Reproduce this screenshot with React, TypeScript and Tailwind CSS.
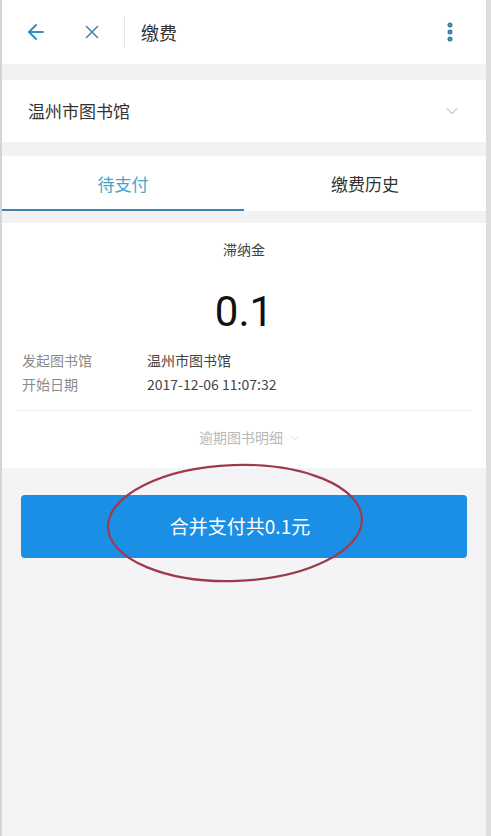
import { ArrowLeft, X, EllipsisVertical, ChevronDown } from 'lucide-react';

const font = { fontFamily: '"Noto Sans CJK SC", "Noto Sans", sans-serif' };

function Header() {
  return (
    <div className="h-[64px] bg-white flex items-center">
      <ArrowLeft className="ml-[22px] w-[24px] h-[24px] text-[#2e90c8]" strokeWidth={2} />
      <X className="ml-[33px] w-[22px] h-[22px] text-[#4f86ad]" strokeWidth={1.8} />
      <div className="ml-[21px] w-px h-[30px] bg-[#e6e6e6]" />
      <div className="ml-[16px] text-[18px] text-[#333]">缴费</div>
      <div className="flex-1" />
      <EllipsisVertical className="mr-[24px] w-[24px] h-[28px] text-[#2f7f9c]" strokeWidth={3} />
    </div>
  );
}

function InfoRow({ label, value }: { label: string; value: string }) {
  return (
    <div className="flex items-center h-[24px] text-[14px] leading-[24px]">
      <div className="w-[125px] text-[#8a8a8a]">{label}</div>
      <div className="text-[#444]">{value}</div>
    </div>
  );
}

export default function App() {
  return (
    <div
      className="relative w-[491px] h-[836px] bg-[#f4f4f7] border-l-2 border-l-[#d4d4d4] border-r-[5px] border-r-[#dedede] overflow-hidden"
      style={font}
    >
      <Header />

      <div className="h-[16px] bg-[#f2f2f3]" />

      <div className="h-[62px] bg-white flex items-center px-[26px]">
        <div className="flex-1 text-[17px] text-[#333]">温州市图书馆</div>
        <ChevronDown className="w-[20px] h-[20px] text-[#cfcfcf] -mr-[2px]" strokeWidth={1.5} />
      </div>

      <div className="h-[14px] bg-[#f2f2f3]" />

      <div className="h-[55px] bg-white flex">
        <div className="w-1/2 flex flex-col">
          <div className="flex-1 flex items-center justify-center text-[17px] text-[#45a6c9] pt-[2px]">
            待支付
          </div>
          <div className="h-[2px] bg-[#3b82b4]" />
        </div>
        <div className="w-1/2 flex items-center justify-center text-[17px] text-[#333]">
          缴费历史
        </div>
      </div>

      <div className="h-[12px] bg-[#f2f2f3]" />

      <div className="h-[245px] bg-white flex flex-col">
        <div className="mt-[16px] text-center text-[14px] text-[#444]">滞纳金</div>
        <div
          className="mt-[26px] text-center text-[42px] leading-[52px] text-[#111]"
          style={{ fontFamily: 'Roboto, "Noto Sans", sans-serif' }}
        >
          0.1
        </div>
        <div className="mt-[10px] px-[20px]">
          <InfoRow label="发起图书馆" value="温州市图书馆" />
          <InfoRow label="开始日期" value="2017-12-06 11:07:32" />
        </div>
        <div className="mt-[14px] mx-[14px] h-px bg-[#efefef]" />
        <div className="mt-[16px] flex items-center justify-center text-[14px] text-[#b8b8b8]">
          <span className="ml-[12px]">逾期图书明细</span>
          <ChevronDown className="ml-[6px] w-[12px] h-[12px] text-[#cfcfcf]" strokeWidth={1.5} />
        </div>
      </div>

      <div className="relative mt-[27px] mx-[19px]">
        <button className="w-full h-[63px] rounded-[4px] bg-[#1b8fe6] text-white text-[19px] flex items-center justify-center">
          <span className="mr-[8px]">合并支付共0.1元</span>
        </button>
        <svg
          className="absolute left-[84px] top-[-33px] pointer-events-none"
          width="260"
          height="122"
          viewBox="0 0 260 122"
        >
          <ellipse
            cx="130"
            cy="61"
            rx="127"
            ry="58"
            fill="none"
            stroke="#9e3b4a"
            strokeWidth="2.2"
            transform="rotate(-2 130 61)"
          />
        </svg>
      </div>
    </div>
  );
}
